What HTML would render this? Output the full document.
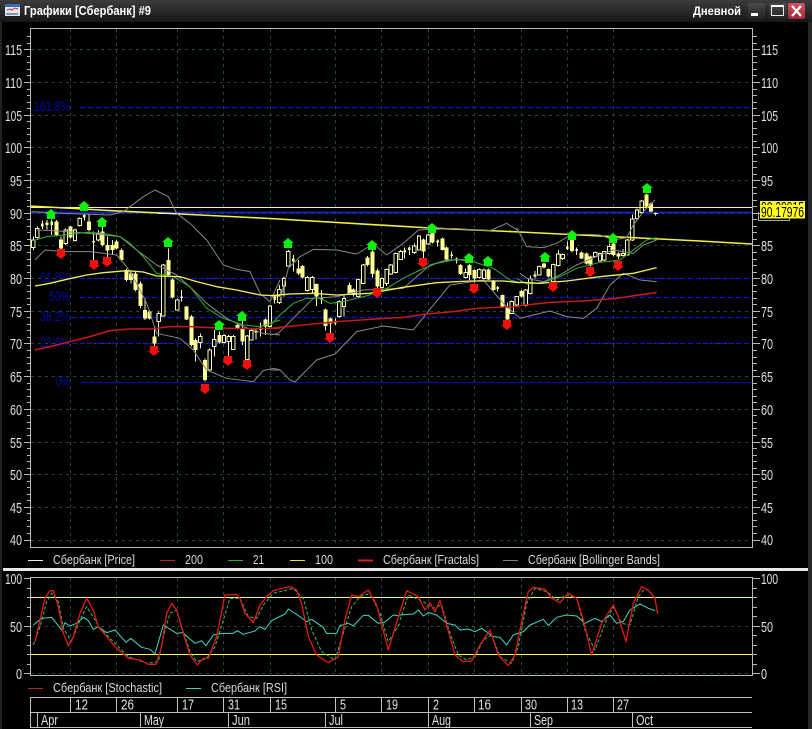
<!DOCTYPE html>
<html><head><meta charset="utf-8"><title>Графики</title>
<style>
html,body{margin:0;padding:0;background:#000;width:812px;height:729px;overflow:hidden}
svg{display:block}
text{font-family:"Liberation Sans","Noto Sans CJK SC",sans-serif;fill:#e0e0e0;font-size:13px}
.t text{font-size:14.5px}
.l text{font-size:13px;fill:#d8d8d8}
.fib text{font-size:13.5px;fill:#0808a8}
.ln{fill:none}
</style></head><body>
<svg width="812" height="729" viewBox="0 0 812 729" xmlns="http://www.w3.org/2000/svg">
<defs><linearGradient id="tb" x1="0" y1="0" x2="0" y2="1"><stop offset="0" stop-color="#3c3c3c"/><stop offset="1" stop-color="#161616"/></linearGradient>
<linearGradient id="bt" x1="0" y1="0" x2="0" y2="1"><stop offset="0" stop-color="#4a4a4a"/><stop offset="1" stop-color="#222"/></linearGradient>
<linearGradient id="cl" x1="0" y1="0" x2="0" y2="1"><stop offset="0" stop-color="#d85060"/><stop offset="1" stop-color="#a02838"/></linearGradient></defs>
<rect width="812" height="729" fill="#000"/>
<rect width="812" height="22" fill="url(#tb)"/>
<rect x="0" y="22" width="2" height="707" fill="#222"/><rect x="808" y="22" width="4" height="707" fill="#262626"/>
<!-- title icon -->
<rect x="5" y="4" width="15" height="12" fill="#dfe6f0"/><rect x="5" y="4" width="15" height="3" fill="#3a6ea8"/>
<path d="M7 10l3-1 2 1 3-2 3 1" stroke="#c03030" fill="none"/><path d="M7 15v-2M9 15v-2M11 15v-2M13 15v-2M15 15v-2M17 15v-2" stroke="#345" fill="none"/>
<text x="24" y="15" textLength="127" lengthAdjust="spacingAndGlyphs" style="font-size:12.5px;font-weight:bold;fill:#fff">Графики [Сбербанк] #9</text>
<text x="693" y="15" textLength="48" lengthAdjust="spacingAndGlyphs" style="font-size:12px;font-weight:bold;fill:#fff">Дневной</text>
<rect x="748" y="3" width="17" height="16" rx="2" fill="url(#bt)"/><rect x="751" y="13" width="7" height="3" fill="#fff"/>
<rect x="769" y="3" width="18" height="16" rx="2" fill="url(#bt)"/><rect x="771.5" y="5.5" width="12" height="10" fill="none" stroke="#eee"/><rect x="771" y="5" width="13" height="2" fill="#fff"/>
<rect x="788" y="3" width="17" height="16" rx="2" fill="url(#cl)"/><path d="M792 6l9 10M801 6l-9 10" stroke="#fff" stroke-width="2.2"/>
<!-- grid -->
<path d="M31 49.5H752M31 82.5H752M31 115.5H752M31 147.5H752M31 180.5H752M31 213.5H752M31 245.5H752M31 278.5H752M31 311.5H752M31 343.5H752M31 376.5H752M31 409.5H752M31 442.5H752M31 474.5H752M31 507.5H752M31 540.5H752M70.5 29V547M116.5 29V547M177.5 29V547M223.5 29V547M270.5 29V547M335.5 29V547M381.5 29V547M428.5 29V547M474.5 29V547M521.5 29V547M567.5 29V547M613.5 29V547M31 626.5H752M31 673.5H752M70.5 578V675M116.5 578V675M177.5 578V675M223.5 578V675M270.5 578V675M335.5 578V675M381.5 578V675M428.5 578V675M474.5 578V675M521.5 578V675M567.5 578V675M613.5 578V675" stroke="#24483e" stroke-dasharray="3 4" fill="none"/>
<!-- fib -->
<path d="M80 107.5H752M72 278.5H752M80 297.5H752M72 317.5H752M72 343.5H752" stroke="#1010c8" stroke-width="1.2" stroke-dasharray="5 3" fill="none"/>
<path d="M80 382.5H752" stroke="#0808c0" fill="none"/>
<path d="M31 212.5H752" stroke="#1020b8" stroke-width="2" fill="none"/>
<g class="fib">
<text x="34" y="111" textLength="36" lengthAdjust="spacingAndGlyphs">161.8%</text>
<text x="44" y="216" textLength="26" lengthAdjust="spacingAndGlyphs">100%</text>
<text x="40" y="282" textLength="30" lengthAdjust="spacingAndGlyphs">61.8%</text>
<text x="49" y="301" textLength="21" lengthAdjust="spacingAndGlyphs">50%</text>
<text x="40" y="321" textLength="30" lengthAdjust="spacingAndGlyphs">38.2%</text>
<text x="40" y="347" textLength="30" lengthAdjust="spacingAndGlyphs">23.6%</text>
<text x="56" y="386" textLength="14" lengthAdjust="spacingAndGlyphs">0%</text>
</g>
<!-- candles z5 -->
<g transform="translate(30 180) scale(.3333)" shape-rendering="crispEdges">
<path stroke="#f4f4c0" stroke-width="3" fill="none" d="M10 170V210M22 140V175M37 122V147M51 120V148M65 118V165M79 120V170M93 170V210M107 145V195M121 138V175M135 145V185M149 112V140M163 100V122M177 103V155M191 155V240M205 150V185M217 140V200M232 170V235M247 180V225M260 180V208M275 205V245M289 265V305M303 275V310M317 275V335M331 305V385M345 355V420M359 390V418M373 440V500M386 395V470M400 252V410M415 205V290M428 295V355M442 355V392M455 330V365M469 378V420M484 405V500M497 475V545M511 460V505M525 535V605M539 505V575M553 450V530M568 455V490M582 462V490M596 465V530M610 465V510M623 430V448M637 420V495M652 465V540M664 450V482M678 448V478M692 428V470M706 415V465M720 375V442M734 345V370"/>
<path fill="#ffff99" d="M73 125h12v40h-12zM87 178h12v27h-12zM115 140h12v32h-12zM171 125h12v25h-12zM211 155h12v40h-12zM226 195h12v17h-12zM241 195h12v15h-12zM254 185h12v20h-12zM269 210h12v30h-12zM283 270h12v30h-12zM297 280h12v20h-12zM311 280h12v50h-12zM325 310h12v68h-12zM339 390h12v25h-12zM353 395h12v20h-12zM367 470h12v20h-12zM409 240h12v45h-12zM422 298h12v54h-12zM463 380h12v38h-12zM478 410h12v85h-12zM491 480h12v30h-12zM519 540h12v60h-12zM562 465h12v22h-12zM617 435h12v10h-12zM631 445h12v40h-12zM700 418h12v22h-12zM33 130h8v10h-8zM47 128h8v7h-8zM61 125h8v10h-8zM159 105h8v7h-8zM187 183h8v5h-8zM451 350h8v4h-8zM674 452h8v6h-8zM688 442h8v8h-8zM730 352h8v8h-8z"/>
<path fill="#000" stroke="#f8f8b0" stroke-width="3" d="M5 180h10v23h-10zM17 145h10v27h-10zM102 150h10v40h-10zM130 150h10v32h-10zM144 115h10v22h-10zM200 160h10v20h-10zM381 400h10v25h-10zM395 255h10v153h-10zM437 360h10v30h-10zM506 470h10v18h-10zM534 510h10v60h-10zM548 478h10v22h-10zM577 467h10v20h-10zM591 470h10v15h-10zM605 470h10v38h-10zM647 468h10v70h-10zM659 452h10v28h-10zM715 378h10v62h-10z"/>
</g>
<!-- candles z6 -->
<g transform="translate(270 200) scale(.3333)" shape-rendering="crispEdges">
<path stroke="#f4f4c0" stroke-width="3" fill="none" d="M14 285V310M28 255V312M42 230V290M55 150V200M70 165V215M85 180V225M97 195V235M112 228V275M127 228V280M140 250V318M155 270V312M167 325V392M181 352V400M196 355V375M208 302V352M222 285V350M238 248V285M250 265V290M265 235V292M280 192V252M292 168V200M307 130V232M322 205V270M336 232V265M350 205V258M362 192V225M377 158V220M392 150V180M404 143V175M418 140V165M433 130V162M447 105V152M460 115V178M475 102V135M488 95V130M503 118V140M518 112V152M530 140V185M545 155V175M560 172V190M572 192V225M587 205V235M599 192V240M614 208V248M628 205V235M642 205V238M656 205V240M671 240V272M683 258V275M697 283V322M712 308V370M725 302V342M740 288V318"/>
<path fill="#ffff99" d="M79 205h12v15h-12zM91 198h12v34h-12zM134 252h12v38h-12zM161 328h12v50h-12zM175 355h12v15h-12zM232 255h12v25h-12zM244 268h12v17h-12zM286 172h12v23h-12zM301 155h12v67h-12zM316 212h12v48h-12zM454 118h12v37h-12zM482 98h12v30h-12zM512 115h12v35h-12zM524 142h12v36h-12zM566 195h12v27h-12zM593 195h12v30h-12zM608 210h12v25h-12zM650 208h12v30h-12zM665 242h12v28h-12zM691 285h12v35h-12zM706 322h12v36h-12zM10 290h8v6h-8zM66 175h8v10h-8zM151 292h8v8h-8zM192 363h8v7h-8zM400 150h8v8h-8zM414 143h8v7h-8zM499 122h8v6h-8zM541 163h8v5h-8zM556 176h8v6h-8zM679 261h8v6h-8z"/>
<path fill="#000" stroke="#f8f8b0" stroke-width="3" d="M23 268h10v40h-10zM37 235h10v23h-10zM50 155h10v43h-10zM107 232h10v40h-10zM122 232h10v36h-10zM203 305h10v45h-10zM217 295h10v25h-10zM260 238h10v52h-10zM275 195h10v55h-10zM331 235h10v27h-10zM345 208h10v42h-10zM357 195h10v27h-10zM372 160h10v58h-10zM387 155h10v23h-10zM428 138h10v20h-10zM442 108h10v42h-10zM470 105h10v27h-10zM582 218h10v14h-10zM623 208h10v24h-10zM637 210h10v25h-10zM720 305h10v35h-10zM735 290h10v25h-10z"/>
</g>
<!-- candles z7 -->
<g transform="translate(500 175) scale(.3333)" shape-rendering="crispEdges">
<path stroke="#f4f4c0" stroke-width="3" fill="none" d="M64 345V368M77 342V395M91 302V358M105 288V310M118 272V302M132 262V280M146 280V308M160 265V322M175 225V275M188 235V255M202 200V225M216 170V232M230 218V240M244 230V252M259 232V268M272 242V275M286 230V248M300 232V260M313 228V258M328 205V238M341 200V245M355 232V252M369 222V245M382 192V242M397 118V198M411 100V135M425 75V115M439 55V98M453 82V112M467 112V122"/>
<path fill="#ffff99" d="M58 348h12v17h-12zM126 265h12v13h-12zM140 282h12v23h-12zM210 195h12v33h-12zM238 232h12v18h-12zM253 235h12v30h-12zM266 245h12v27h-12zM335 205h12v35h-12zM349 235h12v10h-12zM433 58h12v37h-12zM447 85h12v25h-12zM101 298h8v7h-8zM198 215h8v7h-8zM226 222h8v6h-8zM460 114h14v3h-14z"/>
<path fill="#000" stroke="#f8f8b0" stroke-width="3" d="M72 345h10v47h-10zM86 312h10v43h-10zM113 275h10v25h-10zM155 268h10v52h-10zM170 237h10v35h-10zM183 238h10v12h-10zM281 232h10v13h-10zM295 235h10v23h-10zM308 230h10v25h-10zM323 215h10v20h-10zM364 235h10v7h-10zM377 195h10v45h-10zM392 132h10v63h-10zM406 105h10v25h-10zM420 78h10v34h-10z"/>
</g>
<!-- yellow top lines -->
<path d="M30 207.5H752" stroke="#ffff60" class="ln"/>
<path d="M30 206L118 211L160 213L200 215L270 218.5L430 228L520 232L600 236L640 238L700 241L752 244" stroke="#f0f040" stroke-width="1.6" class="ln"/>
<path d="M158 213.5H180" stroke="#eee" class="ln"/>
<!-- MAs z5 -->
<g transform="translate(30 180) scale(.3333)" fill="none" stroke-linejoin="round">
<path stroke="#888" stroke-width="3" d="M5 95L100 100L240 105L280 95L340 50L375 30L415 50L440 100L480 130L530 180L580 255L620 268L660 275L690 340L720 365L750 300"/>
<path stroke="#888" stroke-width="3" d="M20 150L70 152L150 158L270 170L320 210L380 255L440 285L490 330L530 370L590 415L640 440L700 460L750 465"/>
<path stroke="#888" stroke-width="3" d="M15 240L45 210L100 215L180 215L260 225L290 260L320 310L350 370L380 460L450 475L490 510L530 570L590 595L670 605L700 572L730 565L750 570"/>
<path stroke="#30b030" stroke-width="3" d="M10 182L50 170L100 165L170 157L220 160L270 170L300 190L340 230L380 280L430 290L480 320L530 385L580 415L640 435L690 440L750 420"/>
<path stroke="#f0f050" stroke-width="4" d="M15 318L60 310L110 298L170 285L220 278L290 272L340 276L380 288L450 290L500 305L560 320L620 330L690 345L750 348"/>
<path stroke="#c81818" stroke-width="4.500" d="M15 510L60 500L120 485L180 470L240 452L300 447L360 447L420 440L480 440L540 443L600 445L660 446L720 445L750 445"/>
</g>
<!-- MAs z6 -->
<g transform="translate(270 200) scale(.3333)" fill="none" stroke-linejoin="round">
<path stroke="#888" stroke-width="3" d="M30 300L55 205L90 170L130 148L200 150L260 162L310 132L350 165L400 130L445 90L550 85L590 88L660 92L710 70L750 95"/>
<path stroke="#888" stroke-width="3" d="M0 405L25 400L60 365L130 295L200 290L280 270L400 265L480 195L530 180L600 178"/>
<path stroke="#888" stroke-width="3" d="M0 510L30 510L60 540L75 546L110 510L140 480L195 462L260 395L340 378L430 390L470 340L540 255L640 240L700 310L750 355"/>
<path stroke="#30b030" stroke-width="3" d="M0 378L30 345L70 310L110 295L150 295L180 310L220 305L260 295L300 285L350 265L400 235L450 210L500 190L560 178L610 185L670 205L720 240L750 248"/>
<path stroke="#f0f050" stroke-width="4" d="M0 287L60 282L130 280L200 285L300 280L400 262L500 248L600 243L700 243L750 248"/>
<path stroke="#c81818" stroke-width="4.500" d="M0 385L100 375L200 365L300 358L400 352L470 342L550 335L620 325L680 322L750 320"/>
</g>
<!-- MAs z7 -->
<g transform="translate(500 175) scale(.3333)" fill="none" stroke-linejoin="round">
<path stroke="#888" stroke-width="3" d="M50 158L80 215L130 218L170 205L215 178L270 178L300 180L340 195L380 188L400 150L430 110L465 75"/>
<path stroke="#888" stroke-width="3" d="M60 295L80 310L130 320L180 300L230 270L300 240L340 225L400 235L430 210L470 195"/>
<path stroke="#888" stroke-width="3" d="M60 430L100 420L150 408L200 425L250 430L290 400L330 330L370 295L420 315L470 320"/>
<path stroke="#30b030" stroke-width="3" d="M50 310L80 327L130 322L180 305L230 280L300 262L360 255L400 225L440 195L470 188"/>
<path stroke="#f0f050" stroke-width="4" d="M60 322L120 325L200 318L300 305L400 295L470 278"/>
<path stroke="#c81818" stroke-width="4.500" d="M60 392L150 382L250 378L350 370L470 352"/>
</g>
<!-- fractals -->
<path fill="#10f010" d="M51 209l6 5h-2v5h-8v-5h-2zM84 201l6 5h-2v5h-8v-5h-2zM102 217l6 5h-2v5h-8v-5h-2zM168 237l6 5h-2v5h-8v-5h-2zM219 320l6 5h-2v5h-8v-5h-2zM242 311l6 5h-2v5h-8v-5h-2zM288 238l6 5h-2v5h-8v-5h-2zM372 240l6 5h-2v5h-8v-5h-2zM432 223l6 5h-2v5h-8v-5h-2zM469 253l6 5h-2v5h-8v-5h-2zM488 256l6 5h-2v5h-8v-5h-2zM545 252l6 5h-2v5h-8v-5h-2zM572 230l6 5h-2v5h-8v-5h-2zM613 233l6 5h-2v5h-8v-5h-2zM647 183l6 5h-2v5h-8v-5h-2z"/>
<path fill="#f01010" d="M61 259l6-5h-2v-5h-8v5h-2zM94 270l6-5h-2v-5h-8v5h-2zM107 267l6-5h-2v-5h-8v5h-2zM154 356l6-5h-2v-5h-8v5h-2zM205 394l6-5h-2v-5h-8v5h-2zM228 366l6-5h-2v-5h-8v5h-2zM247 370l6-5h-2v-5h-8v5h-2zM330 343l6-5h-2v-5h-8v5h-2zM377 298l6-5h-2v-5h-8v5h-2zM423 268l6-5h-2v-5h-8v5h-2zM474 294l6-5h-2v-5h-8v5h-2zM507 330l6-5h-2v-5h-8v5h-2zM553 292l6-5h-2v-5h-8v5h-2zM590 277l6-5h-2v-5h-8v5h-2zM618 271l6-5h-2v-5h-8v5h-2z"/>
<!-- frames + ticks -->
<g stroke="#b8b8b8" fill="none" shape-rendering="crispEdges">
<rect x="30.5" y="28.5" width="722" height="519"/>
<rect x="30.5" y="577.5" width="722" height="98"/>
<path d="M24 49.5h6M24 82.5h6M24 115.5h6M24 147.5h6M24 180.5h6M24 213.5h6M24 245.5h6M24 278.5h6M24 311.5h6M24 343.5h6M24 376.5h6M24 409.5h6M24 442.5h6M24 474.5h6M24 507.5h6M24 540.5h6M753 49.5h7M753 82.5h7M753 115.5h7M753 147.5h7M753 180.5h7M753 213.5h7M753 245.5h7M753 278.5h7M753 311.5h7M753 343.5h7M753 376.5h7M753 409.5h7M753 442.5h7M753 474.5h7M753 507.5h7M753 540.5h7"/>
<path d="M27 36.5h3M27 43.5h3M27 56.5h3M27 62.5h3M27 69.5h3M27 75.5h3M27 89.5h3M27 95.5h3M27 102.5h3M27 108.5h3M27 121.5h3M27 128.5h3M27 134.5h3M27 141.5h3M27 154.5h3M27 161.5h3M27 167.5h3M27 174.5h3M27 187.5h3M27 193.5h3M27 200.5h3M27 206.5h3M27 219.5h3M27 226.5h3M27 232.5h3M27 239.5h3M27 252.5h3M27 259.5h3M27 265.5h3M27 272.5h3M27 285.5h3M27 291.5h3M27 298.5h3M27 304.5h3M27 317.5h3M27 324.5h3M27 330.5h3M27 337.5h3M27 350.5h3M27 357.5h3M27 363.5h3M27 370.5h3M27 383.5h3M27 389.5h3M27 396.5h3M27 402.5h3M27 415.5h3M27 422.5h3M27 428.5h3M27 435.5h3M27 448.5h3M27 455.5h3M27 461.5h3M27 468.5h3M27 481.5h3M27 487.5h3M27 494.5h3M27 500.5h3M27 513.5h3M27 520.5h3M27 526.5h3M27 533.5h3"/>
<path d="M753 36.5h4M753 43.5h4M753 56.5h4M753 62.5h4M753 69.5h4M753 75.5h4M753 89.5h4M753 95.5h4M753 102.5h4M753 108.5h4M753 121.5h4M753 128.5h4M753 134.5h4M753 141.5h4M753 154.5h4M753 161.5h4M753 167.5h4M753 174.5h4M753 187.5h4M753 193.5h4M753 200.5h4M753 206.5h4M753 219.5h4M753 226.5h4M753 232.5h4M753 239.5h4M753 252.5h4M753 259.5h4M753 265.5h4M753 272.5h4M753 285.5h4M753 291.5h4M753 298.5h4M753 304.5h4M753 317.5h4M753 324.5h4M753 330.5h4M753 337.5h4M753 350.5h4M753 357.5h4M753 363.5h4M753 370.5h4M753 383.5h4M753 389.5h4M753 396.5h4M753 402.5h4M753 415.5h4M753 422.5h4M753 428.5h4M753 435.5h4M753 448.5h4M753 455.5h4M753 461.5h4M753 468.5h4M753 481.5h4M753 487.5h4M753 494.5h4M753 500.5h4M753 513.5h4M753 520.5h4M753 526.5h4M753 533.5h4"/>
<path d="M24 578.5h6M24 626.5h6M24 673.5h6M753 578.5h7M753 626.5h7M753 673.5h7M27 588.5h3M27 597.5h3M27 607.5h3M27 616.5h3M27 635.5h3M27 645.5h3M27 654.5h3M27 664.5h3M753 588.5h4M753 597.5h4M753 607.5h4M753 616.5h4M753 635.5h4M753 645.5h4M753 654.5h4M753 664.5h4"/>
</g>
<!-- axis labels -->
<g class="t">
<text x="5" y="55" textLength="17" lengthAdjust="spacingAndGlyphs">115</text><text x="5" y="88" textLength="17" lengthAdjust="spacingAndGlyphs">110</text><text x="5" y="121" textLength="17" lengthAdjust="spacingAndGlyphs">105</text><text x="5" y="153" textLength="17" lengthAdjust="spacingAndGlyphs">100</text><text x="10" y="186" textLength="12" lengthAdjust="spacingAndGlyphs">95</text><text x="10" y="219" textLength="12" lengthAdjust="spacingAndGlyphs">90</text><text x="10" y="251" textLength="12" lengthAdjust="spacingAndGlyphs">85</text><text x="10" y="284" textLength="12" lengthAdjust="spacingAndGlyphs">80</text><text x="10" y="317" textLength="12" lengthAdjust="spacingAndGlyphs">75</text><text x="10" y="349" textLength="12" lengthAdjust="spacingAndGlyphs">70</text><text x="10" y="382" textLength="12" lengthAdjust="spacingAndGlyphs">65</text><text x="10" y="415" textLength="12" lengthAdjust="spacingAndGlyphs">60</text><text x="10" y="448" textLength="12" lengthAdjust="spacingAndGlyphs">55</text><text x="10" y="480" textLength="12" lengthAdjust="spacingAndGlyphs">50</text><text x="10" y="513" textLength="12" lengthAdjust="spacingAndGlyphs">45</text><text x="10" y="545" textLength="12" lengthAdjust="spacingAndGlyphs">40</text>
<text x="761" y="55" textLength="17" lengthAdjust="spacingAndGlyphs">115</text><text x="761" y="88" textLength="17" lengthAdjust="spacingAndGlyphs">110</text><text x="761" y="121" textLength="17" lengthAdjust="spacingAndGlyphs">105</text><text x="761" y="153" textLength="17" lengthAdjust="spacingAndGlyphs">100</text><text x="761" y="186" textLength="12" lengthAdjust="spacingAndGlyphs">95</text><text x="761" y="251" textLength="12" lengthAdjust="spacingAndGlyphs">85</text><text x="761" y="284" textLength="12" lengthAdjust="spacingAndGlyphs">80</text><text x="761" y="317" textLength="12" lengthAdjust="spacingAndGlyphs">75</text><text x="761" y="349" textLength="12" lengthAdjust="spacingAndGlyphs">70</text><text x="761" y="382" textLength="12" lengthAdjust="spacingAndGlyphs">65</text><text x="761" y="415" textLength="12" lengthAdjust="spacingAndGlyphs">60</text><text x="761" y="448" textLength="12" lengthAdjust="spacingAndGlyphs">55</text><text x="761" y="480" textLength="12" lengthAdjust="spacingAndGlyphs">50</text><text x="761" y="513" textLength="12" lengthAdjust="spacingAndGlyphs">45</text><text x="761" y="545" textLength="12" lengthAdjust="spacingAndGlyphs">40</text>
<text x="5" y="584" textLength="17" lengthAdjust="spacingAndGlyphs">100</text><text x="10" y="632" textLength="12" lengthAdjust="spacingAndGlyphs">50</text><text x="16" y="679" textLength="6" lengthAdjust="spacingAndGlyphs">0</text>
<text x="761" y="584" textLength="17" lengthAdjust="spacingAndGlyphs">100</text><text x="761" y="632" textLength="12" lengthAdjust="spacingAndGlyphs">50</text><text x="761" y="679" textLength="6" lengthAdjust="spacingAndGlyphs">0</text>
</g>
<!-- price tag -->
<path d="M758.5 212v8.5h31v-3" stroke="#aaa" fill="none"/>
<rect x="760" y="201" width="45" height="17.500" fill="#ffff20"/>
<text x="761" y="212" textLength="43" lengthAdjust="spacingAndGlyphs" style="fill:#000;font-size:14.5px">90.29915</text>
<rect x="760" y="205" width="45" height="13.500" fill="#ffff20"/>
<text x="761" y="217" textLength="43" lengthAdjust="spacingAndGlyphs" style="fill:#000;font-size:14.5px">90.17976</text>
<!-- legend -->
<path d="M28 560.5h15" stroke="#eee"/><path d="M160 560.5h15" stroke="#c02020"/><path d="M228 560.5h15" stroke="#30b030"/><path d="M290 560.5h15" stroke="#e0e040"/><path d="M358 560.5h15" stroke="#d02020" stroke-width="2"/><path d="M503 560.5h15" stroke="#808080"/>
<path d="M28 688.5h15" stroke="#c02020"/><path d="M186 688.5h15" stroke="#40d0c0"/>
<g class="l">
<text x="53" y="564" textLength="82" lengthAdjust="spacingAndGlyphs">Сбербанк [Price]</text>
<text x="185" y="564" textLength="18" lengthAdjust="spacingAndGlyphs">200</text>
<text x="253" y="564" textLength="11" lengthAdjust="spacingAndGlyphs">21</text>
<text x="315" y="564" textLength="18" lengthAdjust="spacingAndGlyphs">100</text>
<text x="383" y="564" textLength="96" lengthAdjust="spacingAndGlyphs">Сбербанк [Fractals]</text>
<text x="528" y="564" textLength="132" lengthAdjust="spacingAndGlyphs">Сбербанк [Bollinger Bands]</text>
<text x="53" y="692" textLength="109" lengthAdjust="spacingAndGlyphs">Сбербанк [Stochastic]</text>
<text x="211" y="692" textLength="76" lengthAdjust="spacingAndGlyphs">Сбербанк [RSI]</text>
</g>
<!-- separator -->
<rect x="3" y="568" width="805" height="3" fill="#e8e8e8"/>
<!-- lower pane lines -->
<path d="M31 597.5H752M31 654.5H752" stroke="#ffff50" fill="none"/>
<g transform="translate(0 530) scale(.3333)" fill="none" stroke-linejoin="round">
<path stroke="#30c060" stroke-width="3" stroke-dasharray="10 6" d="M100 345L120 290L140 215L155 190L175 215L190 295L215 335L240 270L260 230L285 270L300 295L350 345L385 380L440 400L475 395L490 320L510 250L530 240L545 290L570 365L590 395L620 385L645 350L670 270L690 205L720 205L745 260L770 265L790 225L820 190L880 175L910 205L935 300L965 365L1005 390L1030 310L1055 230L1080 200L1110 190L1140 250L1165 335L1200 280"/>
<path stroke="#40d8c8" stroke-width="3" d="M100 285L125 265L155 262L185 300L195 278L210 288L230 280L250 262L265 272L280 298L295 290L320 308L345 300L378 337L392 325L425 352L450 358L465 372L490 285L530 310L548 308L585 340L605 332L618 347L640 315L665 310L700 310L712 302L730 313L765 303L780 290L795 298L815 272L855 252L865 237L900 260L920 275L935 268L970 292L980 310L1010 310L1020 287L1045 280L1060 288L1090 256L1105 256L1135 280L1155 276L1180 255L1200 258"/>
<path stroke="#e01818" stroke-width="4" d="M105 335L120 270L135 205L150 182L160 182L175 230L190 310L205 347L220 320L240 250L260 205L280 240L295 290L320 320L345 350L385 385L420 390L445 403L468 403L485 350L500 250L515 220L530 240L550 310L570 375L592 405L610 385L625 385L650 320L675 195L710 193L720 205L735 250L760 278L780 225L800 200L820 182L870 170L890 180L905 220L925 320L950 375L985 398L1015 380L1035 270L1055 195L1075 200L1105 180L1130 225L1165 360L1200 245"/>
</g>
<g transform="translate(400 530) scale(.3333)" fill="none" stroke-linejoin="round">
<path stroke="#30c060" stroke-width="3" stroke-dasharray="10 6" d="M0 270L25 195L70 215L100 235L125 225L150 310L175 375L200 390L225 380L250 330L275 315L300 380L335 400L355 350L380 220L405 175L440 185L470 210L500 195L530 205L555 300L585 360L615 280L640 230L665 280L690 285L715 200L735 175L760 195"/>
<path stroke="#40d8c8" stroke-width="3" d="M0 255L40 252L55 240L70 258L85 248L110 255L140 280L165 285L180 300L205 297L225 305L245 295L280 320L300 322L320 345L340 315L370 305L390 285L430 268L445 287L470 262L500 255L530 258L555 280L585 265L605 275L630 255L650 280L670 275L690 240L720 222L745 235L765 242"/>
<path stroke="#e01818" stroke-width="4" d="M0 245L20 182L55 200L75 240L90 218L105 245L120 212L140 285L165 375L190 395L215 393L240 345L270 300L295 375L325 407L345 375L365 275L385 185L400 172L435 178L455 205L480 218L505 190L530 205L550 270L575 375L605 280L640 225L655 260L678 335L700 220L725 170L745 180L765 205L773 252"/>
</g>
<!-- date boxes -->
<g stroke="#c0c0c0" fill="none" shape-rendering="crispEdges">
<path d="M30 697.5H752M30 712.5H752M30 727.5H752M30.5 697V728M70.5 697V712M116.5 697V712M177.5 697V712M223.5 697V712M270.5 697V712M335.5 697V712M381.5 697V712M428.5 697V712M474.5 697V712M521.5 697V712M567.5 697V712M613.5 697V712M37.5 712V728M140.5 712V728M228.5 712V728M325.5 712V728M428.5 712V728M530.5 712V728M632.5 712V728"/>
</g>
<g class="t">
<text x="75" y="709.500" textLength="13" lengthAdjust="spacingAndGlyphs">12</text><text x="121" y="709.500" textLength="13" lengthAdjust="spacingAndGlyphs">26</text><text x="182" y="709.500" textLength="12" lengthAdjust="spacingAndGlyphs">17</text><text x="228" y="709.500" textLength="12" lengthAdjust="spacingAndGlyphs">31</text><text x="275" y="709.500" textLength="12" lengthAdjust="spacingAndGlyphs">15</text><text x="340" y="709.500" textLength="6" lengthAdjust="spacingAndGlyphs">5</text><text x="386" y="709.500" textLength="12" lengthAdjust="spacingAndGlyphs">19</text><text x="433" y="709.500" textLength="6" lengthAdjust="spacingAndGlyphs">2</text><text x="478" y="709.500" textLength="13" lengthAdjust="spacingAndGlyphs">16</text><text x="525" y="709.500" textLength="12" lengthAdjust="spacingAndGlyphs">30</text><text x="571" y="709.500" textLength="12" lengthAdjust="spacingAndGlyphs">13</text><text x="617" y="709.500" textLength="12" lengthAdjust="spacingAndGlyphs">27</text>
<text x="41" y="725" textLength="17" lengthAdjust="spacingAndGlyphs">Apr</text><text x="144" y="725" textLength="20" lengthAdjust="spacingAndGlyphs">May</text><text x="232" y="725" textLength="18" lengthAdjust="spacingAndGlyphs">Jun</text><text x="329" y="725" textLength="14" lengthAdjust="spacingAndGlyphs">Jul</text><text x="432" y="725" textLength="19" lengthAdjust="spacingAndGlyphs">Aug</text><text x="534" y="725" textLength="19" lengthAdjust="spacingAndGlyphs">Sep</text><text x="636" y="725" textLength="17" lengthAdjust="spacingAndGlyphs">Oct</text>
</g>
</svg>
</body></html>
